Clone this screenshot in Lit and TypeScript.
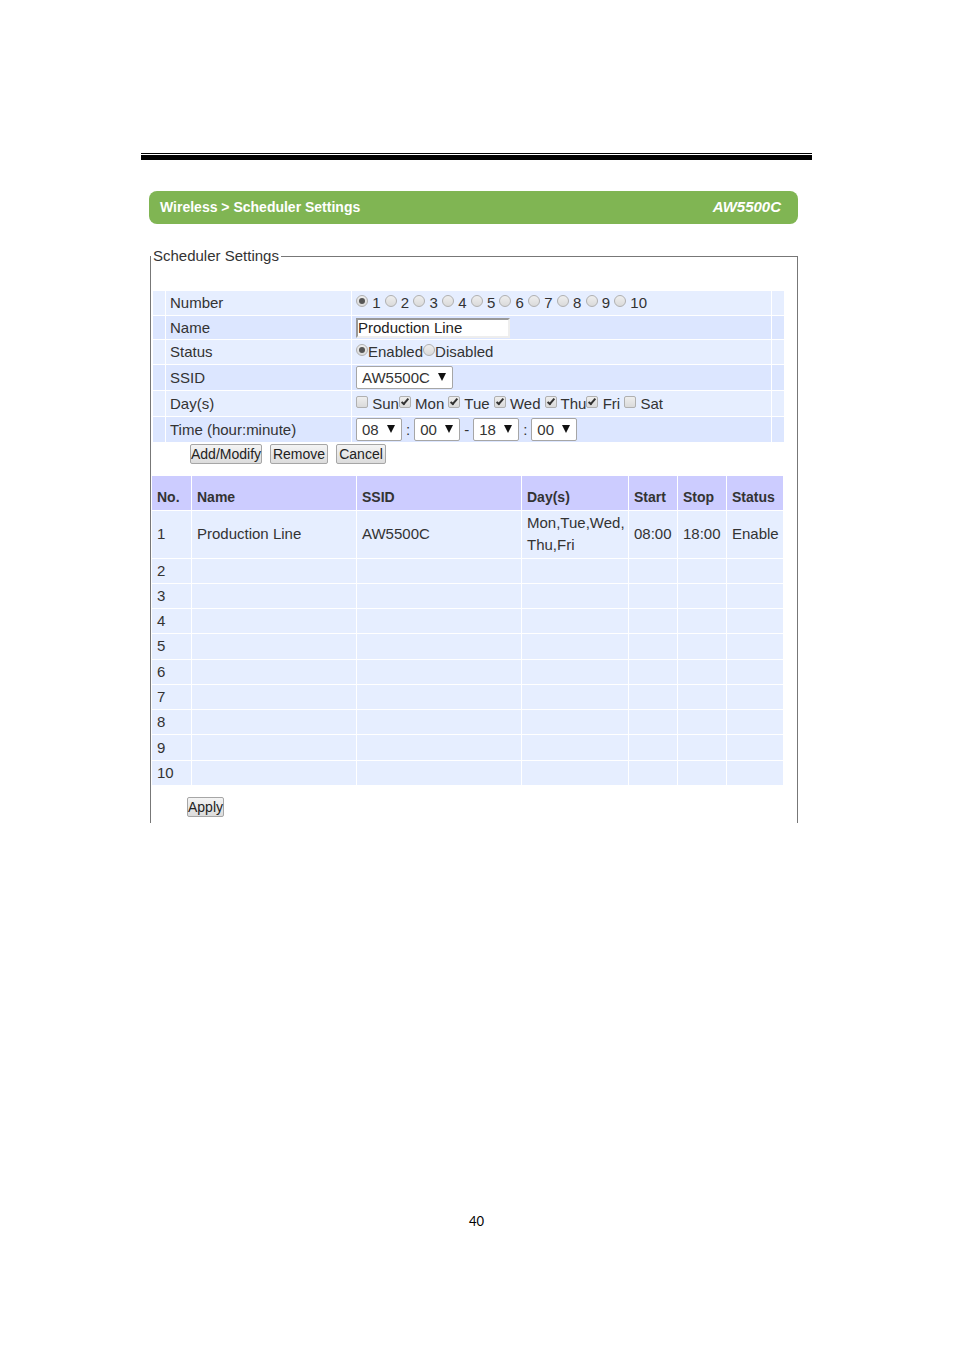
import { html, css, LitElement } from "lit";
import { customElement, property, state } from "lit/decorators.js";

interface Schedule {
    no: number;
    name?: string;
    ssid?: string;
    days?: string[];
    start?: string;
    stop?: string;
    status?: string;
}

const NUMBERS = [1, 2, 3, 4, 5, 6, 7, 8, 9, 10];

const DAYS = ["Sun", "Mon", "Tue", "Wed", "Thu", "Fri", "Sat"];

// these two labels run straight into the next tick box
const TIGHT = ["Sun", "Thu"];

const SCHEDULES: Schedule[] = NUMBERS.map((no) =>
    no === 1
        ? {
              no,
              name: "Production Line",
              ssid: "AW5500C",
              days: ["Mon,Tue,Wed,", "Thu,Fri"],
              start: "08:00",
              stop: "18:00",
              status: "Enable",
          }
        : { no }
);

const pad = (n: number) => String(n).padStart(2, "0");
const HOURS = Array.from({ length: 24 }, (_, i) => pad(i));
const MINUTES = Array.from({ length: 60 }, (_, i) => pad(i));

@customElement("select-box")
export class SelectBox extends LitElement {
    static styles = css`
    :host {
        display: inline-block;
        position: relative;
        vertical-align: middle;
    }

    :host::after {
        content: "";
        position: absolute;
        top: 7px;
        right: 7px;
        border: 4px solid transparent;
        border-top: 8px solid #111;
        border-bottom: 0;
        pointer-events: none;
    }

    select {
        appearance: none;
        display: block;
        box-sizing: border-box;
        height: 23px;
        margin: 0;
        padding: 0 22px 0 5px;
        border: 1px solid #a6a6a6;
        border-radius: 2px;
        background: #fff;
        color: #333;
        font: 15px/20px "Liberation Sans", Arial, sans-serif;
    }
    `;

    @property() label = "";
    @property() value = "";
    @property({ attribute: false }) options: string[] = [];

    render() {
        return html`
            <select aria-label=${this.label}>
                ${this.options.map(
                    (o) => html`<option ?selected=${o === this.value}>${o}</option>`
                )}
            </select>
        `;
    }
}

@customElement("app-root")
export class AppRoot extends LitElement {
    static styles = css`
    :host {
        display: block;
        box-sizing: border-box;
        padding: 153px 142px 0 141px;
        background: #fff;
        color: #333;
        font: 15px/20px "Liberation Sans", Arial, sans-serif;
    }

    .rule {
        height: 1px;
        margin: 0;
        border: 0 solid #000;
        border-top-width: 1px;
        border-bottom-width: 5px;
    }

    .panel {
        margin: 31px 14px 0 8px;
    }

    .title-bar {
        display: flex;
        justify-content: space-between;
        align-items: center;
        height: 33px;
        padding: 0 17px 2px 11px;
        box-sizing: border-box;
        border-radius: 8px;
        background: #80b553;
        color: #fff;
    }

    h1 {
        margin: 0;
        font-size: 14px;
        line-height: 20px;
    }

    .model {
        font-weight: bold;
        font-style: italic;
    }

    fieldset {
        min-width: 0;
        margin: 22px 0 0 1px;
        padding: 24px 13px 6px 0;
        border: 1px solid #777;
        border-bottom: 0;
    }

    legend {
        padding: 0 2px;
    }

    table {
        width: 100%;
        table-layout: fixed;
        border-spacing: 1px;
    }

    th,
    td {
        padding: 0;
        text-align: left;
        white-space: nowrap;
    }

    .settings {
        margin-left: 1px;
    }

    .settings th,
    .settings td {
        padding-left: 4px;
        font-weight: normal;
    }

    .settings tr {
        height: 24px;
        background: #e6eeff;
    }

    .settings tr:nth-child(even) {
        background: #dce6ff;
    }

    .settings tr.short {
        height: 23px;
    }

    .settings tr.tall {
        height: 25px;
    }

    .edge {
        width: 8px;
    }

    .label {
        width: 181px;
    }

    .times {
        display: flex;
        align-items: center;
        gap: 4px;
    }

    input[type="text"] {
        display: block;
        box-sizing: border-box;
        width: 154px;
        height: 20px;
        margin: 0;
        padding: 0;
        border: 2px solid;
        border-color: #999 #eee #eee #999;
        background: #fff;
        color: #222;
        font: inherit;
    }

    input[type="radio"],
    input[type="checkbox"] {
        appearance: none;
        display: inline-block;
        position: relative;
        box-sizing: border-box;
        width: 12px;
        height: 12px;
        margin: 0;
        border: 1px solid #b0b0b0;
        background: linear-gradient(#eee, #dadada);
        vertical-align: 1px;
    }

    input[type="radio"] {
        border-radius: 50%;
    }

    input[type="checkbox"] {
        border-radius: 2px;
    }

    input[type="radio"]:checked::before {
        content: "";
        position: absolute;
        inset: 2px;
        border-radius: 50%;
        background: #555;
    }

    input[type="checkbox"]:checked::before {
        content: "";
        position: absolute;
        top: 0;
        left: 3px;
        width: 2px;
        height: 6px;
        border: solid #333;
        border-width: 0 2px 2px 0;
        transform: rotate(40deg);
    }

    button {
        height: 20px;
        padding: 0;
        border: 1px solid #a6a6a6;
        border-radius: 2px;
        background: linear-gradient(#f4f4f4, #dcdcdc);
        color: #222;
        font: 14px/18px "Liberation Sans", Arial, sans-serif;
    }

    .actions {
        display: grid;
        grid-template-columns: 72px 58px 50px;
        gap: 8px;
        margin: 1px 0 11px 39px;
    }

    .list {
        height: 311px;
    }

    .list th {
        height: 26px;
        padding: 8px 0 0 5px;
        background: #ccccff;
        font-size: 14px;
    }

    .list td {
        height: 24px;
        padding-left: 5px;
        background: #e6eeff;
        line-height: 22px;
    }

    .list .filled td {
        height: 46px;
    }

    .no {
        width: 34px;
    }

    .days {
        width: 101px;
    }

    .time {
        width: 43px;
    }

    .status {
        width: 51px;
    }

    .apply {
        display: flex;
        margin: 11px 0 0 36px;
    }

    footer {
        margin-top: 388px;
        color: #000;
        font: 13px/20px Lato, sans-serif;
        text-align: center;
    }
    `;

    @state() private selected = 1;
    @state() private checkedDays = ["Mon", "Tue", "Wed", "Thu", "Fri"];

    private renderNumbers() {
        return NUMBERS.map(
            (n) => html`<label><input
                type="radio"
                name="number"
                .checked=${n === this.selected}
                @change=${() => (this.selected = n)}
            > ${n}</label> `
        );
    }

    private renderDays() {
        return DAYS.map(
            (day) => html`<label><input
                type="checkbox"
                .checked=${this.checkedDays.includes(day)}
            > ${day}</label>${TIGHT.includes(day) ? "" : " "}`
        );
    }

    private renderSettings() {
        return html`
            <table class="settings">
                <tr>
                    <td class="edge"></td>
                    <th class="label">Number</th>
                    <td>${this.renderNumbers()}</td>
                    <td class="edge"></td>
                </tr>
                <tr class="short">
                    <td></td>
                    <th><label for="name">Name</label></th>
                    <td><input id="name" type="text" value="Production Line"></td>
                    <td></td>
                </tr>
                <tr>
                    <td></td>
                    <th>Status</th>
                    <td><label><input type="radio" name="status" checked>Enabled</label><label><input type="radio" name="status">Disabled</label></td>
                    <td></td>
                </tr>
                <tr class="tall">
                    <td></td>
                    <th>SSID</th>
                    <td>
                        <div class="times">
                            <select-box label="SSID" value="AW5500C" .options=${["AW5500C"]}></select-box>
                        </div>
                    </td>
                    <td></td>
                </tr>
                <tr class="tall">
                    <td></td>
                    <th>Day(s)</th>
                    <td>${this.renderDays()}</td>
                    <td></td>
                </tr>
                <tr class="tall">
                    <td></td>
                    <th>Time (hour:minute)</th>
                    <td>
                        <div class="times">
                            <select-box label="Start hour" value="08" .options=${HOURS}></select-box>
                            <span>:</span>
                            <select-box label="Start minute" value="00" .options=${MINUTES}></select-box>
                            <span>-</span>
                            <select-box label="Stop hour" value="18" .options=${HOURS}></select-box>
                            <span>:</span>
                            <select-box label="Stop minute" value="00" .options=${MINUTES}></select-box>
                        </div>
                    </td>
                    <td></td>
                </tr>
            </table>
        `;
    }

    private renderList() {
        return html`
            <table class="list">
                <thead>
                    <tr>
                        <th class="no">No.</th>
                        <th>Name</th>
                        <th>SSID</th>
                        <th class="days">Day(s)</th>
                        <th class="time">Start</th>
                        <th class="time">Stop</th>
                        <th class="status">Status</th>
                    </tr>
                </thead>
                <tbody>
                    ${SCHEDULES.map(
                        (s) => html`
                            <tr class=${s.name ? "filled" : ""}>
                                <td>${s.no}</td>
                                <td>${s.name}</td>
                                <td>${s.ssid}</td>
                                <td>${s.days?.map((line) => html`<div>${line}</div>`)}</td>
                                <td>${s.start}</td>
                                <td>${s.stop}</td>
                                <td>${s.status}</td>
                            </tr>
                        `
                    )}
                </tbody>
            </table>
        `;
    }

    render() {
        return html`
            <hr class="rule">
            <main class="panel">
                <header class="title-bar">
                    <h1>Wireless &gt; Scheduler Settings</h1>
                    <span class="model">AW5500C</span>
                </header>
                <fieldset>
                    <legend>Scheduler Settings</legend>
                    ${this.renderSettings()}
                    <div class="actions">
                        <button type="button">Add/Modify</button>
                        <button type="button">Remove</button>
                        <button type="button">Cancel</button>
                    </div>
                    ${this.renderList()}
                    <div class="apply">
                        <button type="button">Apply</button>
                    </div>
                </fieldset>
            </main>
            <footer>40</footer>
        `;
    }
}
